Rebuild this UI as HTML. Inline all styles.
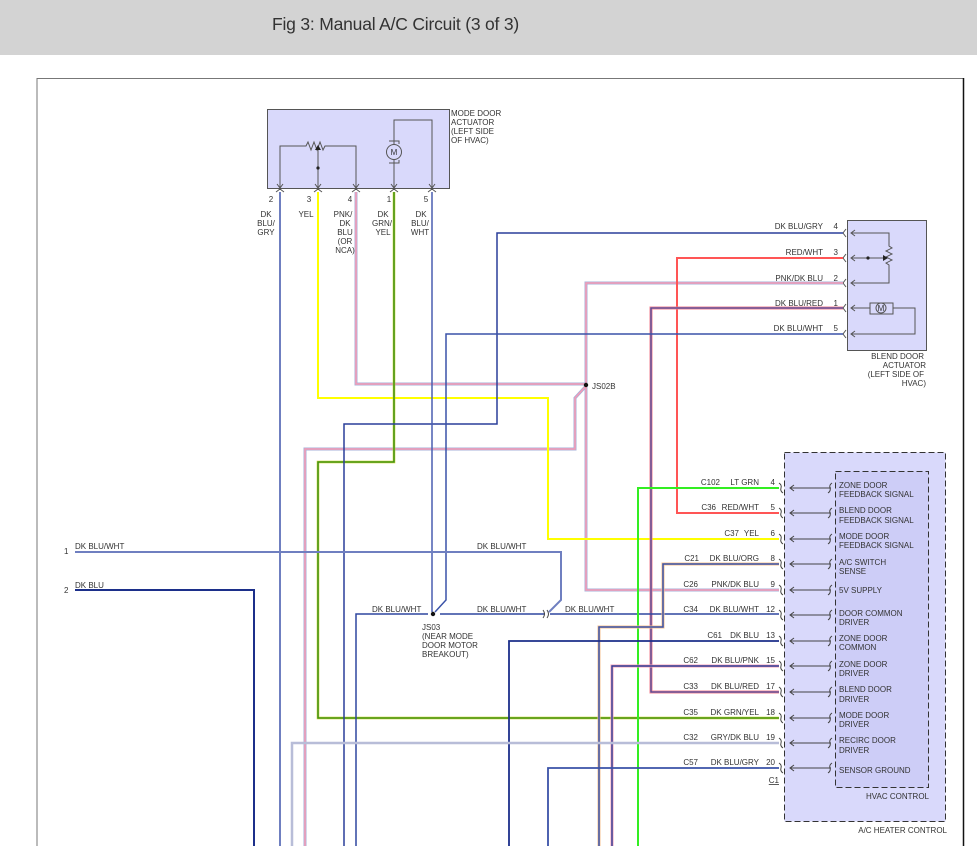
<!DOCTYPE html>
<html><head><meta charset="utf-8"><style>
html,body{margin:0;padding:0;background:#fff;width:977px;height:857px;overflow:hidden}
.hdr{position:absolute;left:0;top:0;width:977px;height:55px;background:#d3d3d3}
.hdr span{position:absolute;left:272px;top:14px;font:17.5px "Liberation Sans",sans-serif;color:#333;letter-spacing:-0.2px}
svg{position:absolute;left:0;top:0}
text{font-family:"Liberation Sans",sans-serif;font-size:8px;fill:#333}
</style></head><body>
<div class="hdr"><span>Fig 3: Manual A/C Circuit (3 of 3)</span></div>
<svg width="977" height="857" viewBox="0 0 977 857">
<path d="M37 846V78.5H963.5V846" fill="none" stroke="#777" stroke-width="1"/>
<path d="M963.5 78V846" stroke="#111" stroke-width="1.5"/>

<rect x="267.5" y="109.5" width="182" height="79" fill="#d9d9fb" stroke="#555"/>
<g fill="none" stroke="#555" stroke-width="1">
<path d="M280 188V146H306l2-4 3 8 3-8 3 8 3-8 3 8 2-4H356V188"/>
<path d="M318 188V150"/>
<path d="M394 188V160M394 144V120H432V188"/>
<circle cx="394" cy="152" r="7.5"/>
<path d="M389 141h10v3M389 163h10v-3"/>
</g>
<path d="M318 145l-3 5h6z" fill="#222"/>
<circle cx="318" cy="168" r="1.6" fill="#222"/>
<g fill="none" stroke="#555" stroke-width="1">
<path d="M277 184l3 4 3-4M315 184l3 4 3-4M353 184l3 4 3-4M391 184l3 4 3-4M429 184l3 4 3-4"/>
<path d="M276 192l4-3 4 3M314 192l4-3 4 3M352 192l4-3 4 3M390 192l4-3 4 3M428 192l4-3 4 3"/>
</g>
<text x="394" y="155" font-size="8" text-anchor="middle">M</text>
<text x="451" y="116">MODE DOOR</text><text x="451" y="125">ACTUATOR</text><text x="451" y="134">(LEFT SIDE</text><text x="451" y="143">OF HVAC)</text>
<g text-anchor="middle">
<text x="271" y="202">2</text><text x="309" y="202">3</text><text x="350" y="202">4</text><text x="389" y="202">1</text><text x="426" y="202">5</text>
<text x="266" y="217">DK</text><text x="266" y="226">BLU/</text><text x="266" y="235">GRY</text>
<text x="306" y="217">YEL</text>
<text x="343" y="217">PNK/</text><text x="345" y="226">DK</text><text x="345" y="235">BLU</text><text x="345" y="244">(OR</text><text x="345" y="253">NCA)</text>
<text x="383" y="217">DK</text><text x="382" y="226">GRN/</text><text x="383" y="235">YEL</text>
<text x="421" y="217">DK</text><text x="420" y="226">BLU/</text><text x="420" y="235">WHT</text>
</g>

<rect x="847.5" y="220.5" width="79" height="130" fill="#d9d9fb" stroke="#555"/>
<g fill="none" stroke="#555">
<path d="M851 233H889V246l3 2-6 3 6 3-6 3 6 3-6 3 3 2V283H851"/>
<path d="M851 258H884"/>
<path d="M851 308H870M893 308H915V334H851"/>
<rect x="870" y="303" width="23" height="11"/>
<circle cx="881" cy="308" r="5"/>
<path d="M846 229l-3 4 3 4M846 254l-3 4 3 4M846 279l-3 4 3 4M846 304l-3 4 3 4M846 330l-3 4 3 4"/>
<path d="M855 230l-4 3 4 3M855 255l-4 3 4 3M855 280l-4 3 4 3M855 305l-4 3 4 3M855 331l-4 3 4 3"/>
</g>
<path d="M888 258l-5-3v6z" fill="#222"/><circle cx="868" cy="258" r="1.6" fill="#222"/>
<text x="881" y="311" font-size="7" text-anchor="middle">M</text>
<g text-anchor="end">
<text x="823" y="229">DK BLU/GRY</text><text x="838" y="229">4</text>
<text x="823" y="255">RED/WHT</text><text x="838" y="255">3</text>
<text x="823" y="281">PNK/DK BLU</text><text x="838" y="281">2</text>
<text x="823" y="306">DK BLU/RED</text><text x="838" y="306">1</text>
<text x="823" y="331">DK BLU/WHT</text><text x="838" y="331">5</text>
<text x="924" y="359">BLEND DOOR</text><text x="926" y="368">ACTUATOR</text><text x="924" y="377">(LEFT SIDE OF</text><text x="926" y="386">HVAC)</text>
</g>

<rect x="784.5" y="452.5" width="161" height="369" fill="#d9d9fb" stroke="#333" stroke-dasharray="6,3"/>
<rect x="835.5" y="471.5" width="93" height="316" fill="#cdcdf7" stroke="#333" stroke-dasharray="6,3"/>
<text x="929" y="799" text-anchor="end">HVAC CONTROL</text>
<text x="947" y="833" text-anchor="end">A/C HEATER CONTROL</text>
<text x="779" y="783" text-anchor="end" text-decoration="underline">C1</text>

<g fill="none" stroke="#444">
<path d="M831 488H790M794 485l-4 3 4 3M779 483q3 2 2 5q-1 3 2 5M832 483q-3 2-2 5q1 3-2 5"/>
<path d="M831 513H790M794 510l-4 3 4 3M779 508q3 2 2 5q-1 3 2 5M832 508q-3 2-2 5q1 3-2 5"/>
<path d="M831 539H790M794 536l-4 3 4 3M779 534q3 2 2 5q-1 3 2 5M832 534q-3 2-2 5q1 3-2 5"/>
<path d="M831 564H790M794 561l-4 3 4 3M779 559q3 2 2 5q-1 3 2 5M832 559q-3 2-2 5q1 3-2 5"/>
<path d="M831 590H790M794 587l-4 3 4 3M779 585q3 2 2 5q-1 3 2 5M832 585q-3 2-2 5q1 3-2 5"/>
<path d="M831 615H790M794 612l-4 3 4 3M779 610q3 2 2 5q-1 3 2 5M832 610q-3 2-2 5q1 3-2 5"/>
<path d="M831 641H790M794 638l-4 3 4 3M779 636q3 2 2 5q-1 3 2 5M832 636q-3 2-2 5q1 3-2 5"/>
<path d="M831 666H790M794 663l-4 3 4 3M779 661q3 2 2 5q-1 3 2 5M832 661q-3 2-2 5q1 3-2 5"/>
<path d="M831 692H790M794 689l-4 3 4 3M779 687q3 2 2 5q-1 3 2 5M832 687q-3 2-2 5q1 3-2 5"/>
<path d="M831 718H790M794 715l-4 3 4 3M779 713q3 2 2 5q-1 3 2 5M832 713q-3 2-2 5q1 3-2 5"/>
<path d="M831 743H790M794 740l-4 3 4 3M779 738q3 2 2 5q-1 3 2 5M832 738q-3 2-2 5q1 3-2 5"/>
<path d="M831 768H790M794 765l-4 3 4 3M779 763q3 2 2 5q-1 3 2 5M832 763q-3 2-2 5q1 3-2 5"/>
</g>
<g>
<text x="839" y="488">ZONE DOOR</text><text x="839" y="497">FEEDBACK SIGNAL</text>
<text x="839" y="513">BLEND DOOR</text><text x="839" y="523">FEEDBACK SIGNAL</text>
<text x="839" y="539">MODE DOOR</text><text x="839" y="548">FEEDBACK SIGNAL</text>
<text x="839" y="565">A/C SWITCH</text><text x="839" y="574">SENSE</text>
<text x="839" y="593">5V SUPPLY</text>
<text x="839" y="616">DOOR COMMON</text><text x="839" y="625">DRIVER</text>
<text x="839" y="641">ZONE DOOR</text><text x="839" y="650">COMMON</text>
<text x="839" y="667">ZONE DOOR</text><text x="839" y="676">DRIVER</text>
<text x="839" y="692">BLEND DOOR</text><text x="839" y="702">DRIVER</text>
<text x="839" y="718">MODE DOOR</text><text x="839" y="727">DRIVER</text>
<text x="839" y="743">RECIRC DOOR</text><text x="839" y="753">DRIVER</text>
<text x="839" y="773">SENSOR GROUND</text>
</g>
<g text-anchor="end">
<text x="720" y="485">C102</text><text x="759" y="485">LT GRN</text><text x="775" y="485">4</text>
<text x="716" y="510">C36</text><text x="759" y="510">RED/WHT</text><text x="775" y="510">5</text>
<text x="739" y="536">C37</text><text x="759" y="536">YEL</text><text x="775" y="536">6</text>
<text x="699" y="561">C21</text><text x="759" y="561">DK BLU/ORG</text><text x="775" y="561">8</text>
<text x="698" y="587">C26</text><text x="759" y="587">PNK/DK BLU</text><text x="775" y="587">9</text>
<text x="698" y="612">C34</text><text x="759" y="612">DK BLU/WHT</text><text x="775" y="612">12</text>
<text x="722" y="638">C61</text><text x="759" y="638">DK BLU</text><text x="775" y="638">13</text>
<text x="698" y="663">C62</text><text x="759" y="663">DK BLU/PNK</text><text x="775" y="663">15</text>
<text x="698" y="689">C33</text><text x="759" y="689">DK BLU/RED</text><text x="775" y="689">17</text>
<text x="698" y="715">C35</text><text x="759" y="715">DK GRN/YEL</text><text x="775" y="715">18</text>
<text x="698" y="740">C32</text><text x="759" y="740">GRY/DK BLU</text><text x="775" y="740">19</text>
<text x="698" y="765">C57</text><text x="759" y="765">DK BLU/GRY</text><text x="775" y="765">20</text>
</g>

<g fill="none" stroke-width="2" stroke-linejoin="miter">
<path d="M356 192V384H586V283H843M586 384V590H779M586 386L575 398V449H305V846" stroke="#a7b0d8" stroke-width="3"/>
<path d="M356 192V384H586V283H843M586 384V590H779M586 386L575 398V449H305V846" stroke="#f59ab5" stroke-width="1.5"/>
<path d="M318 192V398H548V539H779" stroke="#ffff00" stroke-width="2"/>
<path d="M394 192V462H318V718H779" stroke="#c8d020" stroke-width="2.5"/>
<path d="M394 192V462H318V718H779" stroke="#2e8b1e" stroke-width="1.3"/>
<path d="M280 192V846" stroke="#6f7fc0" stroke-width="2"/>
<path d="M843 233H497V424H344V846" stroke="#2a3f9a" stroke-width="1.5"/>
<path d="M843 258H677V513H779" stroke="#ff5555" stroke-width="2"/>
<path d="M843 308H651V692H779" stroke="#f08090" stroke-width="3"/>
<path d="M843 308H651V692H779" stroke="#4a4a9a" stroke-width="1.3"/>
<path d="M843 334H446V600L435 612" stroke="#3a52a8" stroke-width="1.5"/>
<path d="M432 192V612" stroke="#4a5fb0" stroke-width="1.5"/>
<path d="M428 614H356V846M440 614H545M550 614H779" stroke="#2e469f" stroke-width="1.5"/>
<path d="M75 552H561V600L549 612" stroke="#6f7fc0" stroke-width="2"/>
<path d="M75 590H254V846" stroke="#1c2f8a" stroke-width="2"/>
<path d="M779 488H638V846" stroke="#33ee22" stroke-width="2"/>
<path d="M779 564H663V627H599V846" stroke="#f5c090" stroke-width="3"/>
<path d="M779 564H663V627H599V846" stroke="#3a52a8" stroke-width="1.5"/>
<path d="M779 641H509V846" stroke="#1c2f8a" stroke-width="1.8"/>
<path d="M779 666H612V846" stroke="#f5a0b8" stroke-width="3"/>
<path d="M779 666H612V846" stroke="#2e3e96" stroke-width="1.4"/>
<path d="M779 743H292V846" stroke="#b8bdd8" stroke-width="2.5"/>
<path d="M779 768H548V846" stroke="#3a52a8" stroke-width="1.8"/>
</g>
<path d="M543 610q3 4 0 8M547 610q3 4 0 8" fill="none" stroke="#444"/>
<circle cx="586" cy="385" r="2.2" fill="#111"/>
<circle cx="433" cy="614" r="2.2" fill="#111"/>
<text x="592" y="389">JS02B</text>
<text x="422" y="630">JS03</text><text x="422" y="639">(NEAR MODE</text><text x="422" y="648">DOOR MOTOR</text><text x="422" y="657">BREAKOUT)</text>
<text x="372" y="612">DK BLU/WHT</text><text x="477" y="612">DK BLU/WHT</text><text x="565" y="612">DK BLU/WHT</text>
<text x="477" y="549">DK BLU/WHT</text>
<text x="75" y="549">DK BLU/WHT</text><text x="64" y="554">1</text>
<text x="75" y="588">DK BLU</text><text x="64" y="593">2</text>
</svg>
</body></html>
